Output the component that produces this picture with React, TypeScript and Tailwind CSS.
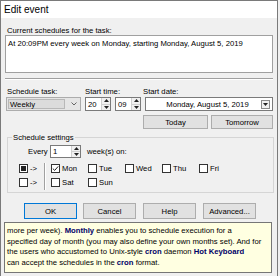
import React from "react";

function Tri({ up }: { up?: boolean }) {
  return (
    <svg width="5" height="3" viewBox="0 0 5 3">
      <path d={up ? "M0 3 L2.5 0 L5 3Z" : "M0 0 L2.5 3 L5 0Z"} fill="#222" />
    </svg>
  );
}

function SpinBox({ value, className }: { value: string; className: string }) {
  return (
    <div className={`flex border border-[#7a7a7a] bg-white ${className}`}>
      <div className="flex-1 pl-[2px] leading-[11px] flex items-center">{value}</div>
      <div className="w-[9px] flex flex-col border-l border-[#cfcfcf] bg-[#f0f0f0]">
        <div className="flex-1 flex items-center justify-center border-b border-[#cfcfcf]">
          <Tri up />
        </div>
        <div className="flex-1 flex items-center justify-center">
          <Tri />
        </div>
      </div>
    </div>
  );
}

function Box({ state }: { state?: "checked" | "filled" }) {
  return (
    <span className="w-[9px] h-[9px] border border-[#333] bg-white flex items-center justify-center shrink-0">
      {state === "filled" && <span className="w-[5px] h-[5px] bg-[#222]" />}
      {state === "checked" && (
        <svg width="7" height="7" viewBox="0 0 7 7">
          <path d="M0.8 3.6 L2.7 5.4 L6.2 1.4" stroke="#222" strokeWidth="1" fill="none" />
        </svg>
      )}
    </span>
  );
}

function Day({ label, checked }: { label: string; checked?: boolean }) {
  return (
    <div className="w-[37px] flex items-center gap-[2px]">
      <Box state={checked ? "checked" : undefined} />
      <span>{label}</span>
    </div>
  );
}

function Button({ label, primary, className }: { label: string; primary?: boolean; className: string }) {
  return (
    <div
      className={`h-[16px] w-[53px] flex items-center justify-center bg-[#e1e1e1] border ${
        primary ? "border-[#0078d7]" : "border-[#adadad]"
      } ${className}`}
    >
      {label}
    </div>
  );
}

export default function App() {
  return (
    <div className="w-[280px] h-[276px] bg-[#f0f0f0] overflow-hidden relative [font-family:'Liberation_Sans',Arial,sans-serif] text-[7.7px] leading-[9px] text-black">
      <div className="w-[278px] h-[280px] border border-[#7a7a7a] flex flex-col bg-[#f0f0f0]">
        <div className="h-[17px] bg-white flex items-center pl-[3px] text-[10px]">Edit event</div>

        <div className="flex flex-col px-[4px]">
          <div className="mt-[8px] pl-[2px]">Current schedules for the task:</div>
          <div className="h-[38px] border border-[#a0a0a0] bg-white pt-[3px] pl-[2px]">
            At 20:09PM every week on Monday, starting Monday, August 5, 2019
          </div>
          <div className="mt-[5px] h-[2px] border-t border-[#a0a0a0] border-b border-b-white" />

          <div className="flex mt-[7px]">
            <div className="w-[75px] ml-[1px] flex flex-col">
              <div className="pl-[1px]">Schedule task:</div>
              <div className="mt-[1px] h-[14px] border border-[#acacac] bg-[#e5e5e5] flex items-center px-[1px]">
                <div className="w-[57px] h-[10px] border border-[#b8b8b8] bg-[#dcdcdc] flex items-center pl-[1px]">
                  Weekly
                </div>
                <svg className="ml-[6px]" width="6" height="4" viewBox="0 0 6 4">
                  <path d="M0.5 0.5 L3 3 L5.5 0.5" stroke="#555" strokeWidth="0.9" fill="none" />
                </svg>
              </div>
            </div>

            <div className="ml-[4px] flex flex-col">
              <div>Start time:</div>
              <div className="mt-[1px] flex gap-[4px]">
                <SpinBox value="20" className="w-[26px] h-[14px]" />
                <SpinBox value="09" className="w-[26px] h-[14px]" />
              </div>
            </div>

            <div className="ml-[2px] flex flex-col w-[130px]">
              <div>Start date:</div>
              <div className="mt-[1px] ml-[2px] h-[14px] border border-[#7a7a7a] bg-white flex items-center">
                <div className="flex-1 text-center pl-[8px]">Monday, August 5, 2019</div>
                <div className="w-[9px] h-[9px] mr-[2px] border border-[#8a8a8a] bg-[#f0f0f0] flex items-center justify-center">
                  <Tri />
                </div>
              </div>
              <div className="mt-[4px] flex gap-[3px]">
                <div className="w-[65px] h-[14px] bg-[#e1e1e1] border border-[#adadad] flex items-center justify-center">
                  Today
                </div>
                <div className="w-[62px] h-[14px] bg-[#e1e1e1] border border-[#adadad] flex items-center justify-center">
                  Tomorrow
                </div>
              </div>
            </div>
          </div>

          <fieldset className="mt-[4px] ml-[2px] w-[267px] border border-[#d5d5d5] px-0 pb-[2px]">
            <legend className="ml-[4px] px-[1px]">Schedule settings</legend>
            <div className="mt-[3px] pl-[20px] flex items-center">
              <span className="w-[22px]">Every</span>
              <SpinBox value="1" className="w-[31px] h-[13px]" />
              <span className="ml-[6px]">week(s) on:</span>
            </div>
            <div className="mt-[6px] pl-[11px] flex">
              <div className="w-[25px] flex flex-col gap-[5px]">
                <div className="flex items-center gap-[2px] h-[9px]">
                  <Box state="filled" />
                  <span>-&gt;</span>
                </div>
                <div className="flex items-center gap-[2px] h-[9px]">
                  <Box />
                  <span>-&gt;</span>
                </div>
              </div>
              <div className="-mt-[1px] h-[27px] w-[2px] border-l border-[#a0a0a0] border-r border-r-white" />
              <div className="ml-[5px] flex flex-col gap-[5px]">
                <div className="flex h-[9px]">
                  <Day label="Mon" checked />
                  <Day label="Tue" />
                  <Day label="Wed" />
                  <Day label="Thu" />
                  <Day label="Fri" />
                </div>
                <div className="flex h-[9px]">
                  <Day label="Sat" />
                  <Day label="Sun" />
                </div>
              </div>
            </div>
          </fieldset>

          <div className="mt-[10px] flex">
            <Button label="OK" primary className="ml-[19px]" />
            <Button label="Cancel" className="ml-[6px]" />
            <Button label="Help" className="ml-[7px]" />
            <Button label="Advanced..." className="ml-[7px]" />
          </div>
        </div>
      </div>

      <div className="absolute left-[4px] top-[222px] w-[268px] h-[51px] bg-[#ffffe1] border border-[#767676] pt-[3px] pl-[2px] leading-[10.5px] whitespace-nowrap">
        more per week). <b className="text-[#000066]">Monthly</b> enables you to schedule execution for a
        <br />
        specified day of month (you may also define your own months set). And for
        <br />
        the users who accustomed to Unix-style <b className="text-[#000066]">cron</b> daemon{" "}
        <b className="text-[#000066]">Hot Keyboard</b>
        <br />
        can accept the schedules in the <b className="text-[#000066]">cron</b> format.
      </div>
    </div>
  );
}
